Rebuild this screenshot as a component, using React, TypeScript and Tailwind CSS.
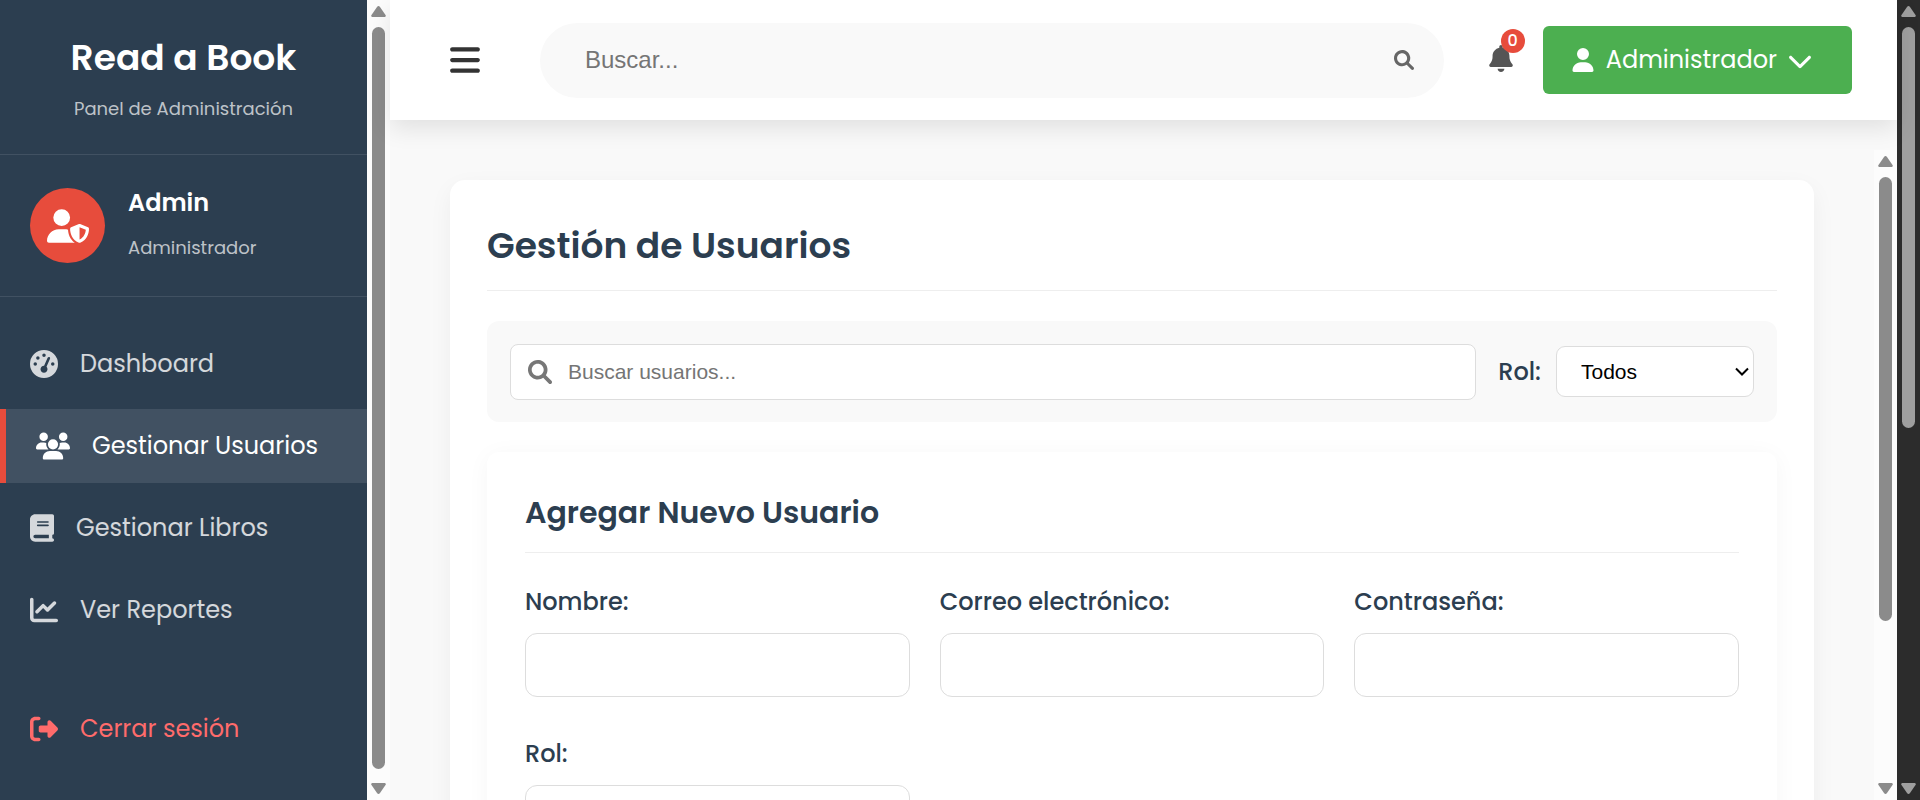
import type { ReactNode } from "react";
import {
  FaBars,
  FaBell,
  FaBook,
  FaChartLine,
  FaGaugeHigh,
  FaRightFromBracket,
  FaUser,
  FaUserShield,
  FaUsers,
} from "react-icons/fa6";

function SearchIcon({ className }: { className: string }) {
  return (
    <svg viewBox="0 0 512 512" aria-hidden="true" className={`shrink-0 fill-current ${className}`}>
      <path d="M500.3 443.7l-119.7-119.7c27.22-40.41 40.65-90.9 33.46-144.7C401.8 87.79 326.8 13.32 235.2 1.723C99.01-15.51-15.51 99.01 1.724 235.2c11.6 91.64 86.08 166.7 177.6 178.9c53.8 7.189 104.3-6.236 144.7-33.46l119.7 119.7c15.62 15.62 40.95 15.62 56.57 0C515.9 484.7 515.9 459.3 500.3 443.7zM79.1 208c0-70.58 57.42-128 128-128s128 57.42 128 128c0 70.58-57.42 128-128 128S79.1 278.6 79.1 208z" />
    </svg>
  );
}

function ChevronIcon({ className }: { className: string }) {
  return (
    <svg viewBox="0 0 448 512" aria-hidden="true" className={`shrink-0 fill-current ${className}`}>
      <path d="M224 416c-8.188 0-16.38-3.125-22.62-9.375l-192-192c-12.5-12.5-12.5-32.75 0-45.25s32.75-12.5 45.25 0L224 338.8l169.4-169.4c12.5-12.5 32.75-12.5 45.25 0s12.5 32.75 0 45.25l-192 192C240.4 412.9 232.2 416 224 416z" />
    </svg>
  );
}

function Arrow({ down = false }: { down?: boolean }) {
  return (
    <svg viewBox="0 0 15 11" className="h-[11px] w-[15px] shrink-0 fill-current">
      {down ? (
        <path d="M1.5 0h12a1.2 1.2 0 0 1 1 2L9 10a1.9 1.9 0 0 1-3 0L.5 2a1.2 1.2 0 0 1 1-2Z" />
      ) : (
        <path d="M1.5 11h12a1.2 1.2 0 0 0 1-2L9 1a1.9 1.9 0 0 0-3 0L.5 9a1.2 1.2 0 0 0 1 2Z" />
      )}
    </svg>
  );
}

function ScrollRail({ tone, thumb }: { tone: string; thumb: string }) {
  return (
    <div aria-hidden="true" className={`flex w-[23px] shrink-0 flex-col items-center gap-[10px] py-[6px] ${tone}`}>
      <Arrow />
      <div className="flex min-h-0 flex-1 flex-col pb-1">
        <div className={`w-[13px] rounded-full bg-current ${thumb}`} />
      </div>
      <Arrow down />
    </div>
  );
}

function NavLink({ icon, label, state = "idle" }: { icon: ReactNode; label: string; state?: "idle" | "active" | "exit" }) {
  const look = {
    idle: "text-white/80",
    active: "border-l-[6px] border-[#e74c3c] bg-white/10 text-white",
    exit: "text-[#ff6b6b]",
  }[state];
  return (
    <a
      href="#"
      aria-current={state === "active" ? "page" : undefined}
      className={`flex h-[74px] items-center gap-[22px] px-[30px] text-[24px] whitespace-nowrap ${look}`}
    >
      {icon}
      {label}
    </a>
  );
}

function Field({ id, label, children }: { id: string; label: string; children: ReactNode }) {
  return (
    <div className="flex flex-col gap-3">
      <label htmlFor={id} className="text-[24px] leading-[38px] font-medium">
        {label}
      </label>
      {children}
    </div>
  );
}

const control = "h-16 w-full rounded-[12px] border border-[#ddd] bg-white px-5 font-['Liberation_Sans',sans-serif] text-[21px] text-black";

function Sidebar() {
  return (
    <aside className="flex w-[367px] shrink-0 flex-col bg-[#2c3e50] text-white">
      <div className="flex h-[155px] flex-col items-center border-b border-white/10 pt-[30px]">
        <h2 className="text-[36px] leading-[56px] font-semibold">Read a Book</h2>
        <p className="pt-[9px] text-[18px] leading-[28px] text-white/70">Panel de Administración</p>
      </div>
      <div className="flex h-[142px] items-center gap-[23px] border-b border-white/10 px-[30px]">
        <div className="flex size-[75px] items-center justify-center rounded-full bg-[#e74c3c]">
          <FaUserShield className="h-[34px] w-[42px]" />
        </div>
        <div className="flex flex-col gap-[9px]">
          <h3 className="text-[24px] leading-9 font-semibold">Admin</h3>
          <p className="text-[18px] leading-9 text-white/70">Administrador</p>
        </div>
      </div>
      <nav className="flex flex-col gap-2 pt-[30px]">
        <NavLink icon={<FaGaugeHigh className="size-7" />} label="Dashboard" />
        <NavLink icon={<FaUsers className="h-7 w-[34px]" />} label="Gestionar Usuarios" state="active" />
        <NavLink icon={<FaBook className="h-7 w-6" />} label="Gestionar Libros" />
        <NavLink icon={<FaChartLine className="size-7" />} label="Ver Reportes" />
      </nav>
      <div className="pt-[45px]">
        <NavLink icon={<FaRightFromBracket className="size-7" />} label="Cerrar sesión" state="exit" />
      </div>
    </aside>
  );
}

function TopBar() {
  return (
    <header className="relative z-10 flex h-[120px] shrink-0 items-center bg-white pr-[45px] pl-[60px] shadow-[0_8px_23px_rgba(0,0,0,0.1)]">
      <button aria-label="Menú" className="mr-[60px] text-[#333]">
        <FaBars className="h-[34px] w-[30px]" />
      </button>
      <div className="flex h-[75px] flex-1 items-center rounded-full bg-[#f9f9f9] pr-[30px] pl-[45px]">
        <input
          type="search"
          aria-label="Buscar"
          placeholder="Buscar..."
          className="min-w-0 flex-1 bg-transparent font-['Liberation_Sans',sans-serif] text-[24px] outline-none placeholder:text-[#757575]"
        />
        <button aria-label="Buscar" className="text-[#666]">
          <SearchIcon className="size-5" />
        </button>
      </div>
      <button aria-label="Notificaciones" className="relative mr-[30px] ml-[45px] pb-1 text-[#555]">
        <FaBell className="h-[27px] w-6" />
        <span className="absolute -top-4 -right-3 flex size-6 items-center justify-center rounded-full bg-[#e74c3c] text-[16px] font-medium text-white">
          0
        </span>
      </button>
      <button className="flex h-[68px] items-center gap-3 rounded-[6px] bg-[#4caf50] pr-[41px] pl-[29px] text-[24px] text-white">
        <FaUser className="h-6 w-[22px]" />
        Administrador
        <ChevronIcon className="h-[25px] w-[22px]" />
      </button>
    </header>
  );
}

export default function App() {
  return (
    <div className="flex h-screen overflow-hidden bg-[#f9f9f9] font-[Poppins,Inter,sans-serif] text-[#2c3e50]">
      <Sidebar />
      <ScrollRail tone="bg-[#fcfcfc] text-[#8b8b8b]" thumb="h-full" />
      <div className="flex min-w-0 flex-1 flex-col">
        <TopBar />
        <div className="mt-[30px] flex min-h-0 flex-1">
          <main className="min-w-0 flex-1 overflow-hidden px-[60px] pt-[30px]">
            <section className="rounded-[15px] bg-white px-[37px] pt-[38px] pb-20 shadow-[0_8px_23px_rgba(0,0,0,0.05)]">
              <h1 className="border-b border-[#eee] pb-4 text-[36px] leading-[56px] font-semibold">
                Gestión de Usuarios
              </h1>
              <div className="mt-[30px] flex h-[101px] items-center rounded-[12px] bg-[#f9f9f9] px-[23px]">
                <div className="flex h-14 flex-1 items-center gap-4 rounded-[8px] border border-[#ddd] bg-white px-[17px]">
                  <SearchIcon className="size-6 text-[#777]" />
                  <input
                    type="search"
                    aria-label="Buscar usuarios"
                    placeholder="Buscar usuarios..."
                    className="min-w-0 flex-1 font-['Liberation_Sans',sans-serif] text-[21px] outline-none placeholder:text-[#757575]"
                  />
                </div>
                <label htmlFor="role-filter" className="mr-[15px] ml-[22px] text-[24px] font-medium">
                  Rol:
                </label>
                <div className="grid items-center">
                  <select
                    id="role-filter"
                    className="col-start-1 row-start-1 h-[51px] w-[198px] appearance-none rounded-[9px] border border-[#ddd] bg-white pl-6 font-['Liberation_Sans',sans-serif] text-[21px] text-black"
                  >
                    <option>Todos</option>
                  </select>
                  <svg
                    viewBox="0 0 14 9"
                    aria-hidden="true"
                    className="pointer-events-none col-start-1 row-start-1 mr-[5px] h-[9px] w-[14px] justify-self-end fill-none stroke-black stroke-2"
                  >
                    <path d="M1 1.5l6 6 6-6" />
                  </svg>
                </div>
              </div>
              <div className="mt-[30px] rounded-[12px] bg-white px-[38px] pt-[38px] pb-16 shadow-[0_3px_23px_rgba(0,0,0,0.04)]">
                <h2 className="border-b border-[#eee] pb-4 text-[30px] leading-[46px] font-semibold">
                  Agregar Nuevo Usuario
                </h2>
                <form className="grid grid-cols-3 gap-x-[30px] gap-y-[38px] pt-[30px]">
                  <Field id="name" label="Nombre:">
                    <input id="name" type="text" className={control} />
                  </Field>
                  <Field id="email" label="Correo electrónico:">
                    <input id="email" type="email" className={control} />
                  </Field>
                  <Field id="password" label="Contraseña:">
                    <input id="password" type="password" className={control} />
                  </Field>
                  <Field id="role" label="Rol:">
                    <select id="role" className={control}>
                      <option>Usuario</option>
                    </select>
                  </Field>
                </form>
              </div>
            </section>
          </main>
          <ScrollRail tone="bg-[#fcfcfc] text-[#8b8b8b]" thumb="h-[75%]" />
        </div>
      </div>
      <ScrollRail tone="bg-[#2c2c2c] text-[#9f9f9f]" thumb="h-[54%]" />
    </div>
  );
}
